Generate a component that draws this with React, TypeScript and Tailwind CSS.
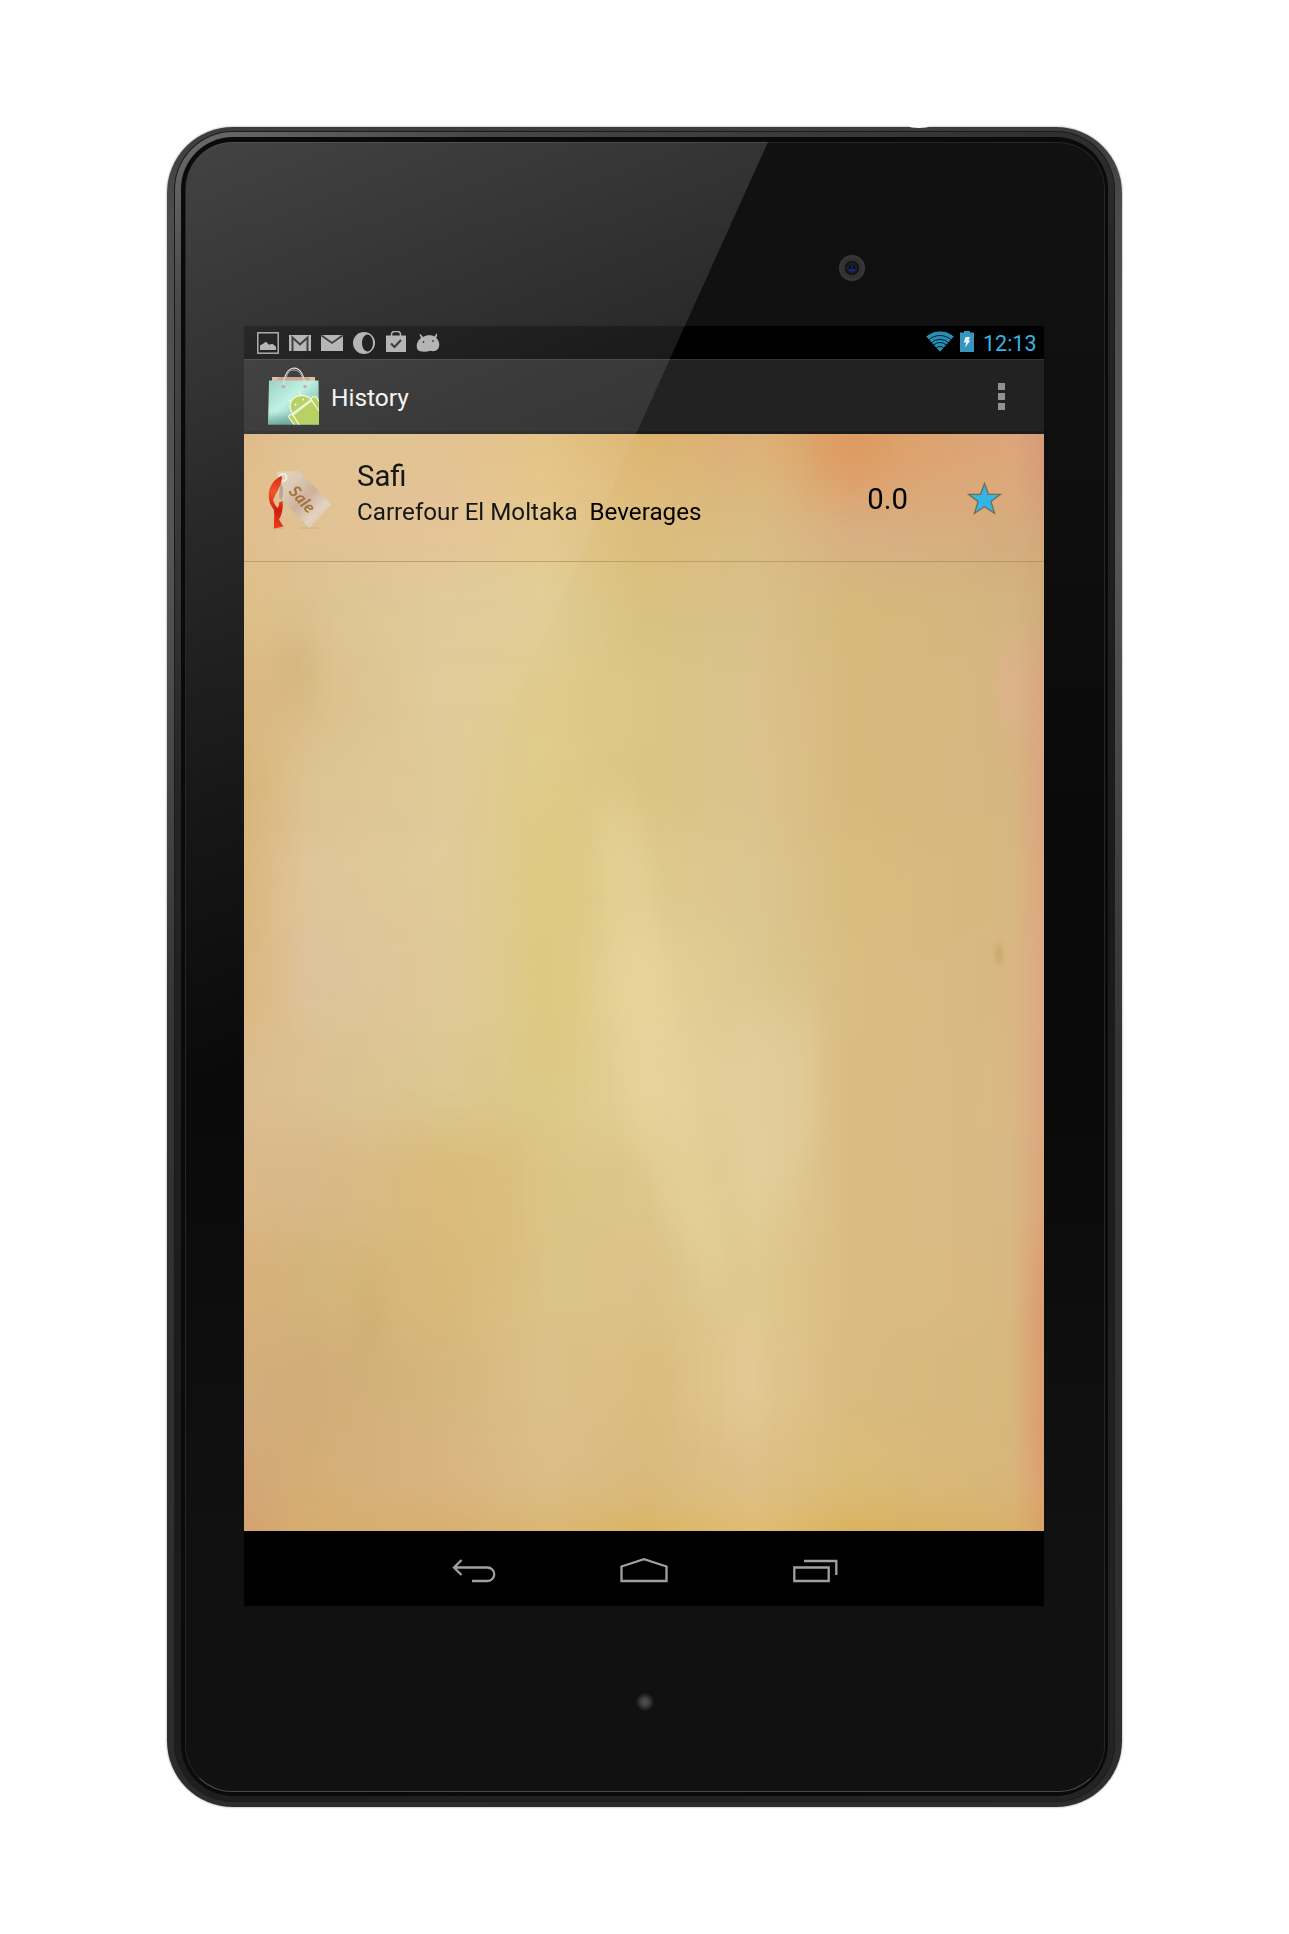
const PAPER_ROWS: [number, string][] = [
  [-20, "dfb683 e0c28e e1bf8a e3bf80 dab268 dcae74 dd9c62 dca47a d59a78"],
  [40, "e1ba86 e0c08f e2c08f e5c484 dfb878 dcb67c dea26c dca87a d69c78"],
  [100, "e0bd88 dfc090 e3c394 e3c88c dbbd7c d9bd84 d8b084 d7ae80 d2a87a"],
  [180, "dcbd84 dcc08c dfc998 e0cd94 d9c180 d9c08a d5b97a d3b680 d2ab7c"],
  [260, "d9b87e dabd86 dfcb98 e0cb8c dcc586 dbc18b d7b97e d5b780 dba585"],
  [350, "d8b376 dcc290 e0c996 e0cc8a dcc484 dcc38d d7b97d d6b680 d9a582"],
  [450, "dcb57c dfc499 e0ca98 dfcc88 dfca8c dcc590 d8bc7e d7b880 daa77f"],
  [550, "dcb87e dec29a dfc898 decb86 e5d298 dcc890 d9bd82 d8b782 dba982"],
  [650, "dbbd90 dbc092 dcc892 dcc986 e4d198 e1cd99 dabc82 d9b884 dca880"],
  [750, "dab888 d8b888 dabd7e dcc486 dec68a e2ce98 dabc82 d8b884 dba67c"],
  [850, "d8b07a d3b47a d9b97a dbc286 dcc288 dfc98e dabc82 d8b880 dc9e72"],
  [950, "d2ae7c d1ac77 d5b67c dbc088 dcbf82 e1c890 d9ba80 d6b77c dd9e72"],
  [1040, "d3a878 d4ad76 d9b482 dbbd88 dabb80 dec088 dabc78 d8b67c dea274"],
  [1120, "d4a06c d8ad6c d8ae6a d9b46c dbb25c e0ba6c dbae58 daae64 d6a65e"],
];

/* The outer columns are narrow bands along the paper's edges. */
const COLUMN_STOPS = [0, 0.08, 0.25, 0.375, 0.5, 0.64, 0.76, 0.96, 1];

function Paper() {
  return (
    <svg className="absolute inset-0 h-full w-full" viewBox="0 0 800 1097" preserveAspectRatio="none">
      <defs>
        {PAPER_ROWS.map(([, colors], i) => (
          <linearGradient key={i} id={`row${i}`} gradientUnits="userSpaceOnUse" x1="0" x2="800" y1="0" y2="0">
            {colors.split(" ").map((c, j) => (
              <stop key={j} offset={COLUMN_STOPS[j]} stopColor={`#${c}`} />
            ))}
          </linearGradient>
        ))}
        <filter id="soft" filterUnits="userSpaceOnUse" x="-200" y="-200" width="1200" height="1500" colorInterpolationFilters="sRGB">
          <feGaussianBlur stdDeviation="4 26" />
        </filter>
        <filter id="spot" filterUnits="userSpaceOnUse" x="-100" y="-100" width="1000" height="1300" colorInterpolationFilters="sRGB">
          <feGaussianBlur stdDeviation="9 24" />
        </filter>
        <filter id="tiny" filterUnits="userSpaceOnUse" x="700" y="480" width="100" height="80" colorInterpolationFilters="sRGB">
          <feGaussianBlur stdDeviation="2 3" />
        </filter>
        <linearGradient id="paperGlare" x1="0" y1="0" x2="0" y2="1">
          <stop offset="0" stopColor="#fff" stopOpacity=".05" />
          <stop offset="1" stopColor="#fff" stopOpacity="0" />
        </linearGradient>
      </defs>
      <g filter="url(#soft)">
        {PAPER_ROWS.map(([y], i) => {
          const top = i === 0 ? -150 : (PAPER_ROWS[i - 1][0] + y) / 2;
          const bottom = i === PAPER_ROWS.length - 1 ? 1280 : (PAPER_ROWS[i + 1][0] + y) / 2;
          return <rect key={i} x="-100" width="1000" y={top} height={bottom - top + 1} fill={`url(#row${i})`} />;
        })}
      </g>
      <g filter="url(#spot)">
        <path d="M350 370L395 370L440 640L490 850L455 850L385 690Z" fill="#e9d7a0" opacity=".4" />
        <path d="M490 570H575V700L545 760H500Z" fill="#e4d0a0" opacity=".4" />
        <path d="M275 380H335L342 630H285Z" fill="#dfc67e" opacity=".5" />
        <path d="M150 700H280V830H200Z" fill="#d9b873" opacity=".3" />
        <path d="M480 880H520V1000H480Z" fill="#e5c998" opacity=".4" />
        <path d="M400 900H435V1010H380Z" fill="#d8b97a" opacity=".4" />
        <ellipse cx="50" cy="235" rx="22" ry="34" fill="#c9a76c" opacity=".4" />
        <ellipse cx="18" cy="260" rx="18" ry="20" fill="#dfaf78" opacity=".5" />
        <ellipse cx="605" cy="14" rx="40" ry="20" fill="#df955a" opacity=".6" />
        <ellipse cx="480" cy="20" rx="14" ry="20" fill="#e2a885" opacity=".5" />
        <ellipse cx="765" cy="255" rx="14" ry="50" fill="#e0b090" opacity=".8" />
        <ellipse cx="755" cy="120" rx="20" ry="12" fill="#c9a878" opacity=".5" />
        <ellipse cx="800" cy="890" rx="5" ry="30" fill="#da8f60" opacity=".7" />
        <ellipse cx="800" cy="1005" rx="6" ry="30" fill="#df9260" opacity=".8" />
        <ellipse cx="125" cy="885" rx="12" ry="24" fill="#c6a66a" opacity=".5" />
      </g>
      <ellipse cx="755" cy="520" rx="4" ry="10" fill="#c8a96e" filter="url(#tiny)" />
      <polygon points="0,0 392,0 152,531 0,700" fill="url(#paperGlare)" />
    </svg>
  );
}

function StatusIcons() {
  return (
    <svg width="184" height="24" viewBox="256 331 184 24" fill="#aaaaaa">
      <rect x="257.8" y="332.8" width="20.4" height="20.4" fill="none" stroke="#aaaaaa" strokeWidth="1.4" />
      <path d="M260 350v-4.500l3-1.800 3-2 3 3 3.500-1 3.500 3v3.300z" />
      <path d="M289 335h22v16h-22z" />
      <path d="M292.500 351v-13.500l7.500 7 7.500-7V351" fill="none" stroke="#202020" strokeWidth="2" />
      <path d="M321 335h22v16h-22z" />
      <path d="M321.500 335.500L332 343l10.500-7.500" fill="none" stroke="#202020" strokeWidth="1.800" />
      <path fillRule="evenodd" d="M364 332a11 11 0 100 22a11 11 0 000-22zM367.500 334.500c3 0 5.500 3.800 5.500 8.500s-2.500 8.500-5.500 8.500-5.500-3.800-5.500-8.500 2.500-8.500 5.500-8.500z" />
      <path d="M386 335.500h20V352h-20z" />
      <path d="M391.500 336v-1.500a3 3 0 013-3h3a3 3 0 013 3v1.500" fill="none" stroke="#aaaaaa" strokeWidth="1.500" />
      <path d="M391 343.500l3.500 3.500 6.500-7" fill="none" stroke="#202020" strokeWidth="2.200" />
      <path d="M420.500 334l2.500 3c3-2 8.500-2.300 11.500-.500l2-3 .8.500-1 4c3 3 3.800 7 2.200 10-1.500 3-5 3.800-8 2.800-5 1.500-11 1.500-13-1.200-1.600-3-1-8.500 3.500-11.600l-1.500-3.500z" />
      <circle cx="423.500" cy="342" r=".9" fill="#202020" />
      <circle cx="433" cy="341" r=".9" fill="#202020" />
    </svg>
  );
}

function Wifi() {
  return (
    <svg width="28" height="22" viewBox="0 0 28 22">
      <clipPath id="fan"><path d="M14 21L0 5.500C8-1.500 20-1.500 28 5.500z" /></clipPath>
      <g clipPath="url(#fan)">
        <path d="M14 21L0 5.500C8-1.500 20-1.500 28 5.500z" fill="#2a8db3" />
        <g fill="none" stroke="#03202b" strokeWidth="1">
          <circle cx="14" cy="21" r="5.500" />
          <circle cx="14" cy="21" r="9.500" />
          <circle cx="14" cy="21" r="12.700" />
          <circle cx="14" cy="21" r="16.500" />
        </g>
      </g>
    </svg>
  );
}

function Battery() {
  return (
    <svg width="14" height="21" viewBox="0 0 14 21">
      <path d="M4 0h6v1.500h4V21H0V1.500h4z" fill="#3597c0" />
      <path d="M5.500 6h4.500l-1.500 3.500h2L5 16.500l1.200-5H3.800z" fill="#e8f5fb" />
    </svg>
  );
}

function AppIcon() {
  return (
    <svg width="54" height="60" viewBox="0 0 54 60">
      <defs>
        <linearGradient id="bag" x1="0" y1="0" x2="1" y2="1">
          <stop offset="0" stopColor="#8fc9b9" />
          <stop offset=".42" stopColor="#b5f0df" />
          <stop offset=".65" stopColor="#8fcbbb" />
          <stop offset="1" stopColor="#b0eadb" />
        </linearGradient>
        <linearGradient id="bagShade" x1="0" y1="0" x2="0" y2="1">
          <stop offset=".7" stopColor="#35786b" stopOpacity="0" />
          <stop offset="1" stopColor="#35786b" stopOpacity=".6" />
        </linearGradient>
        <clipPath id="bagClip"><path d="M0 14h51v44.500H0z" /></clipPath>
      </defs>
      <path d="M4 11h43v4H4z" fill="#c79b7c" />
      <path d="M4 11h7l-3 4H4zM47 11h-7l3 4h4z" fill="#dcb496" />
      <path d="M1 14.500h49.500l.5 44H0z" fill="url(#bag)" />
      <path d="M1 14.500h49.500l.5 44H0z" fill="url(#bagShade)" />
      <path d="M15.500 19C16 9 20 2.500 26 2.200S36 9 37 19" fill="none" stroke="#ddd9db" strokeWidth="1.200" />
      <path d="M18.500 11C20 5 23 4 26 4s6.500 2 8 7" fill="none" stroke="#aaa6a8" strokeWidth="1" />
      <circle cx="15.500" cy="20.500" r="1.800" fill="#b9a3a0" />
      <circle cx="37" cy="20.500" r="1.800" fill="#b9a3a0" />
      <g clipPath="url(#bagClip)" fill="#aecb4e" stroke="#f4fae4" strokeWidth="1.100" strokeLinejoin="round">
        <path d="M27.500 61L21 51.500c-1-2 2-4 4-2.500l7 11z" />
        <path d="M43 33c1.500-3 4.500-3 6-1l5 8v12z" />
        <path d="M25 49L43.500 34.500 54 49v14H34z" />
        <path d="M24.500 47.500c-4-6.500-3-13 3-16.500 5.500-3 12-1.500 16 2.500z" />
        <path d="M23.500 35.500l-3-1.500M32 29l-.5-3.500" />
        <circle cx="27.500" cy="38.500" r=".9" fill="#fff" stroke="none" />
        <circle cx="35" cy="33.500" r=".9" fill="#fff" stroke="none" />
      </g>
    </svg>
  );
}

function SaleTag() {
  return (
    <svg width="66" height="60" viewBox="0 0 66 60">
      <defs>
        <linearGradient id="tag" x1="0" y1="0" x2="1" y2="1">
          <stop offset="0" stopColor="#e0d3b8" />
          <stop offset=".25" stopColor="#dccbb4" />
          <stop offset=".5" stopColor="#cfb09b" />
          <stop offset=".72" stopColor="#e3d2bf" />
          <stop offset="1" stopColor="#d8c0a8" />
        </linearGradient>
        <linearGradient id="ribbon" x1="0" y1="0" x2="0" y2="1">
          <stop offset="0" stopColor="#d42a10" />
          <stop offset=".3" stopColor="#f2542c" />
          <stop offset=".65" stopColor="#cf1d10" />
          <stop offset="1" stopColor="#ee3a18" />
        </linearGradient>
      </defs>
      <ellipse cx="41" cy="58" rx="11" ry="1" fill="#8b6b40" opacity=".12" />
      <ellipse cx="9" cy="58.300" rx="8" ry=".8" fill="#8b6b40" opacity=".12" />
      <path d="M9 1.500L31 1l9 8.500 23.500 25-22 23.500L10 26z" fill="url(#tag)" />
      <path d="M12 12c4 4 4 12 1 18l-2-3z" fill="#9b7062" opacity=".45" />
      <circle cx="15" cy="7.500" r="3.500" fill="none" stroke="#f1eadb" strokeWidth="2.200" />
      <path d="M13 6C5 10 0 18 .8 27c.2 6 2.700 9 5 12.500C7 46 5.500 52 6 58.500l9.500-2-4.500-7c3-5 4.500-12 3.500-18.500l-3.500 1.500c.3 2.500-.5 4-1.500 5.500-2.500-3-3.500-5-4.500-8C7.500 23 13.500 17 14 7z" fill="url(#ribbon)" />
      <text x="20" y="22" transform="rotate(48 20 22)" fontFamily="Lato, sans-serif" fontStyle="italic" fontWeight="700" fontSize="16.500" textLength="30" fill="#a3723c">Sale</text>
    </svg>
  );
}

function Camera() {
  return (
    <svg width="28" height="28" viewBox="0 0 28 28">
      <circle cx="14" cy="14" r="10" fill="none" stroke="#2c2c2c" strokeWidth="6.500" />
      <circle cx="14" cy="14" r="11.500" fill="none" stroke="#404040" strokeWidth="2.500" strokeDasharray="1.200 1.100" />
      <circle cx="14" cy="14" r="8.800" fill="none" stroke="#3c3c3c" strokeWidth="2" strokeDasharray="1 1.300" />
      <circle cx="14" cy="14" r="7" fill="#141416" />
      <circle cx="14" cy="14" r="4.300" fill="#101018" stroke="#303038" strokeWidth=".8" />
      <ellipse cx="14" cy="16" rx="3" ry="1.500" fill="#1c2290" />
      <circle cx="14" cy="12.300" r="1" fill="#232c80" />
    </svg>
  );
}

function Screen() {
  return (
    <div className="relative flex h-[1280px] w-[800px] flex-col bg-black">
      <div className="flex h-[33px] items-center justify-between pr-[9px] pl-3">
        <StatusIcons />
        <div className="flex items-center text-[#33b5e5]">
          <div className="-mt-px"><Wifi /></div>
          <div className="ml-[6px] -mt-[3px]"><Battery /></div>
          <span className="ml-[9px] mt-[3px] w-[52px] text-[21.500px] leading-none whitespace-nowrap">12:13</span>
        </div>
      </div>
      <div className="flex h-[75px] items-center border-t border-b-[3px] border-t-[#363636] border-b-[#1b1b1b] bg-[#222222] pr-[39px] pl-6">
        <AppIcon />
        <h1 className="ml-[9px] flex-1 pt-[6px] text-[24.500px] leading-none text-[#f3f3f3]">History</h1>
        <div className="mt-[2px] flex flex-col gap-[3px]">
          <i className="size-[7px] bg-[#929292]" />
          <i className="size-[7px] bg-[#929292]" />
          <i className="size-[7px] bg-[#929292]" />
        </div>
      </div>
      <main className="relative z-10 h-[1097px] overflow-hidden bg-[#dcc28a]">
        <Paper />
        <div className="relative flex h-[128px] items-center border-b border-[#9c7d4a]/50 pr-[42px] pl-6 text-[#161616]">
          <div className="mt-1"><SaleTag /></div>
          <div className="ml-[23px] flex-1 -mt-[7px]">
            <p className="-mt-px text-[29.300px] leading-[36px]">Safi</p>
            <p className="text-[24.200px] leading-[36px] whitespace-pre">
              Carrefour El Moltaka<span className="ml-3 text-black">Beverages</span>
            </p>
          </div>
          <span className="mr-[59px] mt-[5px] text-[29.300px] leading-none text-black">0.0</span>
          <svg className="mt-px" width="35" height="33" viewBox="0 0 35 33">
            <path d="M17.500 1.500L21.500 12.300H33.500L24 19.600 27.500 31.300 17.500 24.800 7.500 31.300 11 19.600 1.500 12.300H13.500z" fill="#33b5e5" stroke="#766a52" strokeWidth="1.300" />
          </svg>
        </div>
      </main>
      <nav className="flex flex-1 items-center pt-[6px] pl-[208px]" aria-label="System">
        <svg width="44" height="28" viewBox="0 0 44 28" fill="none" stroke="#a0a0a0" strokeWidth="2.300">
          <path d="M9.500 2L2 9.500 9.500 17M1.500 9.500H35.500a6.500 6.500 0 010 13.500H20" />
        </svg>
        <svg className="ml-[124px]" width="48" height="28" viewBox="0 0 48 28" fill="none" stroke="#a0a0a0" strokeWidth="2.300">
          <path d="M1.500 23V8.500L24 1.200 46.500 8.500V23z" />
        </svg>
        <svg className="ml-[125px]" width="46" height="28" viewBox="0 0 46 28" fill="none" stroke="#a0a0a0" strokeWidth="2.300">
          <path d="M1.300 9.500H35.700V23H1.300zM11 3H43.300V17" />
        </svg>
      </nav>
    </div>
  );
}

export default function App() {
  return (
    <div className="flex h-[1934px] w-[1289px] bg-white pt-[127px] pl-[167px] font-[Roboto,sans-serif]">
      <div className="relative h-[1680px] w-[955px] rounded-[66px] bg-[linear-gradient(180deg,#3c3c3c_0%,#4c4c4c_5%,#555555_25%,#333333_55%,#2c2c2c_100%)] px-[7px] pt-[4px] pb-[5px] shadow-[0_0_2px_#777777]">
        <div className="h-full w-full rounded-[59px] bg-[#1b1b1b] p-px">
          <div className="h-full w-full rounded-[58px] bg-[linear-gradient(150deg,#6c6c6c_0%,#484848_8%,#252525_30%,#1a1a1a_60%,#242424_100%)] px-[6px] py-[5px]">
            <div className="h-full w-full rounded-[52px] bg-[#0a0a0a] px-[4px] pt-[5px] pb-[4px] pr-[3px]">
              <div className="flex h-full w-full flex-col overflow-hidden rounded-[47px] border border-[#262626] border-b-[#4a4a4a] bg-[linear-gradient(180deg,#111111_0%,#101010_15%,#0a0a0a_40%,#0a0a0a_60%,#101010_80%,#111111_100%)]">
                <div className="flex h-[183px] pt-[111px] pl-[652px]"><Camera /></div>
                <div className="ml-[58px]"><Screen /></div>
                <div className="flex justify-center pt-[86px]">
                  <span className="size-5 rounded-full bg-[radial-gradient(circle,#505050_0%,#444444_25%,#111111_65%)]" />
                </div>
              </div>
            </div>
          </div>
        </div>
        <svg className="pointer-events-none absolute top-[15px] left-[19px]" width="919" height="1000" viewBox="186 142 919 1000">
          <defs>
            <linearGradient id="glare" gradientUnits="userSpaceOnUse" x1="186" y1="142" x2="520" y2="950">
              <stop offset="0" stopColor="#fff" stopOpacity=".21" />
              <stop offset=".4" stopColor="#fff" stopOpacity=".11" />
              <stop offset="1" stopColor="#fff" stopOpacity="0" />
            </linearGradient>
          </defs>
          <path d="M186 189a47 47 0 0147-47H768L636 434H244V1142H186z" fill="url(#glare)" />
        </svg>
        <span className="absolute -top-[2px] left-[742px] h-[3px] w-[20px] rounded-[50%] bg-white" />
      </div>
    </div>
  );
}
